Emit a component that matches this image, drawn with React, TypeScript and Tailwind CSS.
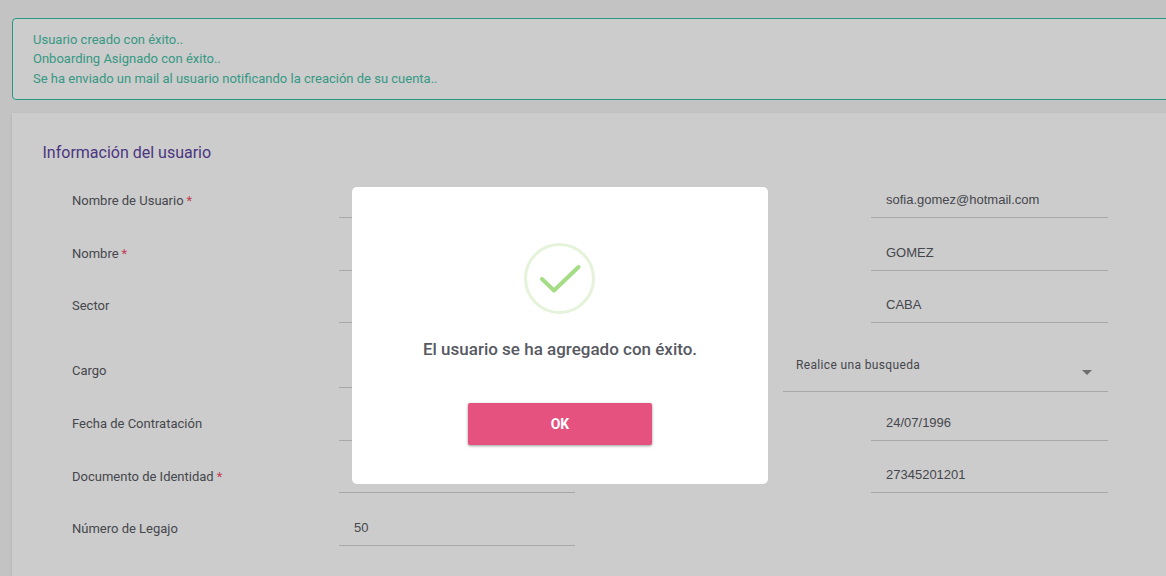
import React from "react";

const labelCls = "w-[315px] shrink-0 pl-[48px] text-[13px] text-[#575962]";

function Value({ text, w = "w-[237px]" }: { text?: string; w?: string }) {
  return (
    <div className={`h-[31px] ${w} border-b border-[#d2d2d2] pl-[15px] pt-[3px] text-[13px] leading-[20px] text-[#575962] font-['Liberation_Sans',sans-serif]`}>
      {text}
    </div>
  );
}

function Row({
  label,
  required,
  left,
  right,
  h,
  mb = "mb-[7px]",
}: {
  label: string;
  required?: boolean;
  left?: string;
  right?: string;
  h: string;
  mb?: string;
}) {
  return (
    <div className={`flex items-end ${h}`}>
      <div className="flex w-[847px] shrink-0 items-end">
        <div className={`${labelCls} ${mb} leading-[20px]`}>
          {label}
          {required && <span className="ml-[3px] text-[#f4516c]">*</span>}
        </div>
        <Value text={left} w="w-[236px]" />
      </div>
      {right && <Value text={right} />}
    </div>
  );
}

export default function App() {
  return (
    <div className="relative h-[576px] w-full overflow-hidden bg-[#f4f4f4] font-['Roboto',sans-serif]">
      <div className="w-[1240px] px-[12px] pt-[18px]">
        <div className="flex h-[82px] flex-col justify-center rounded-[4px] border border-[#34bfa3] bg-white pl-[20px] text-[13px] leading-[19.5px] text-[#45c0a6]">
          <div>Usuario creado con éxito..</div>
          <div>Onboarding Asignado con éxito..</div>
          <div>Se ha enviado un mail al usuario notificando la creación de su cuenta..</div>
        </div>
        <div className="mt-[13px] h-[520px] bg-white pl-[12px] pt-[30px] shadow-sm">
          <h2 className="pl-[18.5px] text-[16px] leading-[20px] text-[#5e45a2]">Información del usuario</h2>
          <div className="mt-[3px]">
            <Row h="h-[52px]" label="Nombre de Usuario" required right="sofia.gomez@hotmail.com" />
            <Row h="h-[53px]" label="Nombre" required right="GOMEZ" />
            <Row h="h-[52px]" label="Sector" right="CABA" />
            <div className="flex h-[65px] items-start">
              <div className="flex h-full w-[759px] shrink-0 items-end">
                <div className={`${labelCls} mb-[7px] leading-[20px]`}>Cargo</div>
                <Value w="w-[236px]" />
              </div>
              <div className="relative h-[69px] w-[325px] border-b border-[#d2d2d2] pl-[13px] pt-[34px] text-[12px] leading-[16px] tracking-[0.35px] text-[#575962]">
                Realice una busqueda
                <div className="absolute right-[16px] top-[47px] h-0 w-0 border-x-[5px] border-t-[5px] border-x-transparent border-t-[#8a8a8a]" />
              </div>
            </div>
            <Row h="h-[53px]" label="Fecha de Contratación" right="24/07/1996" />
            <Row h="h-[52px]" label="Documento de Identidad" required mb="mb-[6px]" right="27345201201" />
            <Row h="h-[53px]" label="Número de Legajo" left="50" />
          </div>
        </div>
      </div>

      <div className="absolute inset-0 bg-black/20" />

      <div className="absolute left-[352px] top-[187px] flex h-[297px] w-[416px] flex-col items-center rounded-[5px] bg-white">
        <svg className="mr-[1px] mt-[56px]" width="71" height="71" viewBox="0 0 71 71" fill="none">
          <circle cx="35.5" cy="35.5" r="34" stroke="#e5f3da" strokeWidth="3" />
          <path d="M18 36 L30 47.5 L54.5 24" stroke="#a5dc86" strokeWidth="4" strokeLinecap="round" strokeLinejoin="round" />
        </svg>
        <div className="mt-[23px] text-[17px] font-medium leading-[24px] text-[#575962]">
          El usuario se ha agregado con éxito.
        </div>
        <button className="mt-[42px] h-[42px] w-[184px] rounded-[2px] bg-[#e6527f] text-[14px] font-bold text-white shadow-[0_1px_3px_rgba(0,0,0,0.4)]">
          OK
        </button>
      </div>
    </div>
  );
}
